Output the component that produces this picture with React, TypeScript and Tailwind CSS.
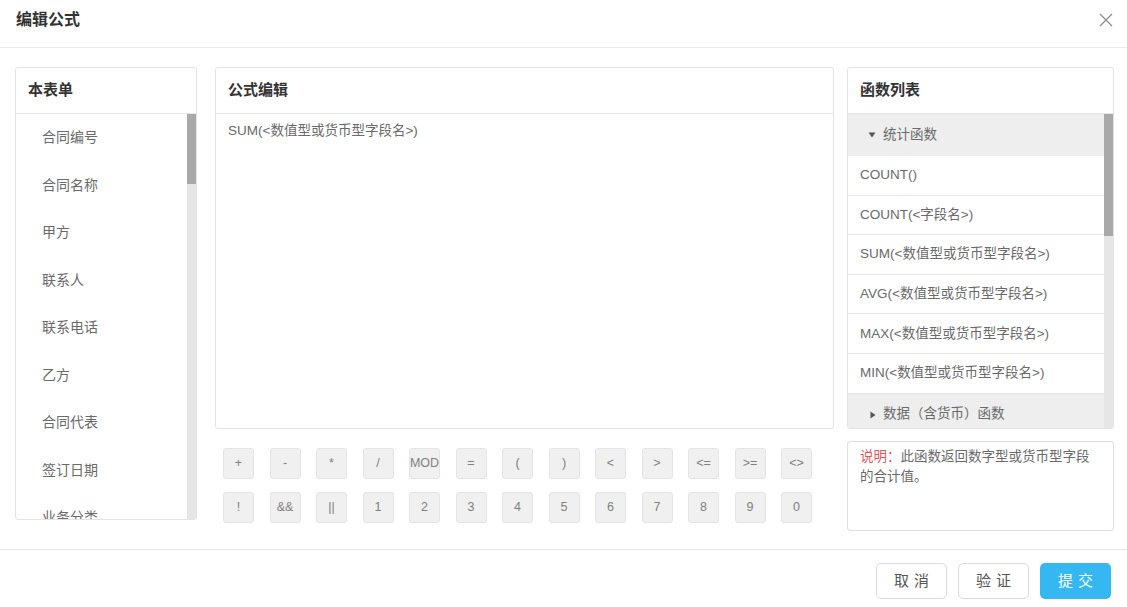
import React from "react";

const FONT = { fontFamily: '"Liberation Sans", "Noto Sans CJK SC", sans-serif' };

const FIELDS = ["合同编号", "合同名称", "甲方", "联系人", "联系电话", "乙方", "合同代表", "签订日期", "业务分类"];

const FUNCS = [
  "COUNT()",
  "COUNT(<字段名>)",
  "SUM(<数值型或货币型字段名>)",
  "AVG(<数值型或货币型字段名>)",
  "MAX(<数值型或货币型字段名>)",
  "MIN(<数值型或货币型字段名>)",
];

const KEYS = [
  "+", "-", "*", "/", "MOD", "=", "(", ")", "<", ">", "<=", ">=", "<>",
  "!", "&&", "||", "1", "2", "3", "4", "5", "6", "7", "8", "9", "0",
];

function PanelHead({ title }: { title: string }) {
  return (
    <div className="h-[46px] shrink-0 border-b border-[#e6e6e6] flex items-center px-3">
      <span className="text-[15px] font-bold text-[#333]">{title}</span>
    </div>
  );
}

function Scrollbar({ thumb }: { thumb: number }) {
  return (
    <div className="w-[9px] shrink-0 bg-[#e6e6e6] flex flex-col">
      <div className="bg-[#a9a9a9]" style={{ height: thumb }} />
    </div>
  );
}

export default function App() {
  return (
    <div className="w-[1127px] h-[607px] bg-white flex flex-col overflow-hidden" style={FONT}>
      <div className="h-[48px] shrink-0 border-b border-[#ebebeb] flex items-start justify-between pl-4 pr-[14px] pt-[11px]">
        <span className="text-[16px] leading-[18px] font-bold text-[#333]">编辑公式</span>
        <svg width="14" height="14" viewBox="0 0 14 14" className="mt-[2px]">
          <path d="M1 1L13 13M13 1L1 13" stroke="#8c8c8c" strokeWidth="1.3" />
        </svg>
      </div>

      <div className="flex-1 flex pt-[19px] pl-[15px]">
        {/* left */}
        <div className="w-[182px] h-[453px] border border-[#e3e3e3] rounded-[3px] flex flex-col overflow-hidden">
          <PanelHead title="本表单" />
          <div className="flex-1 flex min-h-0">
            <div className="flex-1 overflow-hidden">
              {FIELDS.map((f) => (
                <div key={f} className="h-[47.5px] flex items-center pl-[26px] text-[14px] text-[#6a6a6a]">
                  {f}
                </div>
              ))}
            </div>
            <Scrollbar thumb={70} />
          </div>
        </div>

        {/* middle */}
        <div className="ml-[18px] w-[619px] flex flex-col">
          <div className="h-[362px] border border-[#e3e3e3] rounded-[3px] flex flex-col">
            <PanelHead title="公式编辑" />
            <div className="pt-[8px] pl-3 text-[13.5px] leading-[18px] text-[#6a6a6a]">
              SUM(&lt;数值型或货币型字段名&gt;)
            </div>
          </div>
          <div className="mt-[19px] ml-[8px] grid grid-cols-[repeat(13,31px)] gap-x-[15.5px] gap-y-[13px]">
            {KEYS.map((k) => (
              <div
                key={k}
                className="h-[31px] rounded-[3px] bg-[#f0f0f0] border border-[#e4e4e4] flex items-center justify-center text-[12.5px] text-[#808080]"
              >
                {k}
              </div>
            ))}
          </div>
        </div>

        {/* right */}
        <div className="ml-[13px] w-[267px] flex flex-col">
          <div className="h-[362px] border border-[#e3e3e3] rounded-[3px] flex flex-col overflow-hidden">
            <PanelHead title="函数列表" />
            <div className="flex-1 flex min-h-0">
              <div className="flex-1 overflow-hidden">
                <div className="h-[42px] bg-[#eeeeee] flex items-center pl-[20px] gap-[7px] text-[13.5px] text-[#6a6a6a]">
                  <svg width="8" height="6" viewBox="0 0 8 6">
                    <path d="M0.5 0.5H7.5L4 5.5Z" fill="#555" />
                  </svg>
                  统计函数
                </div>
                {FUNCS.map((f) => (
                  <div
                    key={f}
                    className="h-[39.6px] border-b border-[#e6e6e6] flex items-center pl-3 text-[13.5px] text-[#6a6a6a]"
                  >
                    {f}
                  </div>
                ))}
                <div className="h-[42px] bg-[#eeeeee] flex items-center pl-[22px] gap-[7px] text-[13.5px] text-[#6a6a6a]">
                  <svg width="6" height="8" viewBox="0 0 6 8">
                    <path d="M0.5 0.5V7.5L5.5 4Z" fill="#555" />
                  </svg>
                  数据（含货币）函数
                </div>
              </div>
              <Scrollbar thumb={122} />
            </div>
          </div>
          <div className="mt-[12px] h-[90px] border border-[#dedede] rounded-[3px] pt-[5px] pl-3 pr-[22px] text-[13.5px] leading-[20px] text-[#6a6a6a]">
            <span className="text-[#e4545a]">说明：</span>此函数返回数字型或货币型字段的合计值。
          </div>
        </div>
      </div>

      <div className="h-[58px] shrink-0 border-t border-[#e6e6e6] flex items-start justify-end gap-[11px] pt-[13px] pr-[16px]">
        <button className="w-[71px] h-[36px] rounded-[5px] border border-[#dcdcdc] bg-white text-[15px] text-[#555] tracking-[5px] pl-[5px]">
          取消
        </button>
        <button className="w-[71px] h-[36px] rounded-[5px] border border-[#dcdcdc] bg-white text-[15px] text-[#555] tracking-[5px] pl-[5px]">
          验证
        </button>
        <button className="w-[71px] h-[36px] rounded-[5px] bg-[#35b7f1] text-[15px] text-white tracking-[5px] pl-[5px]">
          提交
        </button>
      </div>
    </div>
  );
}
